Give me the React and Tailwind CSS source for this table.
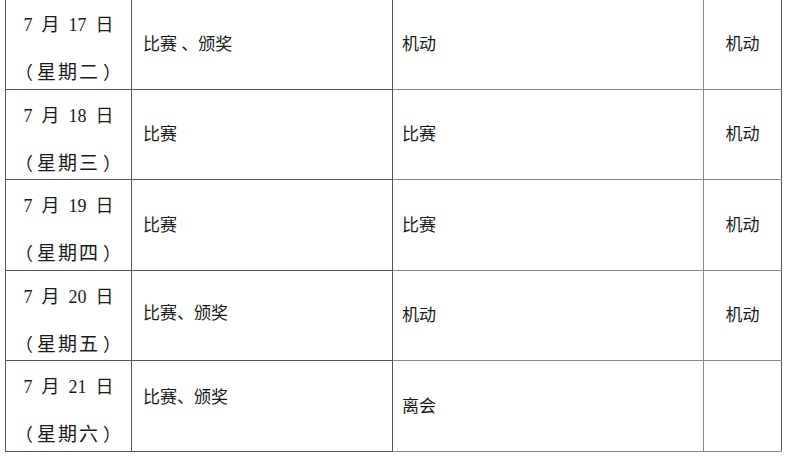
const rows = [
  { day: "17", week: "星期二", a: "比赛 、颁奖", b: "机动", c: "机动", aTop: false },
  { day: "18", week: "星期三", a: "比赛", b: "比赛", c: "机动", aTop: false },
  { day: "19", week: "星期四", a: "比赛", b: "比赛", c: "机动", aTop: false },
  { day: "20", week: "星期五", a: "比赛、颁奖", b: "机动", c: "机动", aTop: "pt-[29px]" },
  { day: "21", week: "星期六", a: "比赛、颁奖", b: "离会", c: "", aTop: "pt-[23px]" },
];

export default function App() {
  return (
    <div
      className="w-[785px] h-[458px] overflow-hidden bg-white text-[#1a1a1a] text-[17px]"
      style={{ fontFamily: '"Liberation Serif", "Noto Sans CJK SC", serif' }}
    >
      <table className="ml-[5px] mt-[-2px] table-fixed border-collapse w-[776px]">
        <colgroup>
          <col className="w-[126px]" />
          <col className="w-[261px]" />
          <col className="w-[311px]" />
          <col className="w-[78px]" />
        </colgroup>
        <tbody>
          {rows.map((r) => (
            <tr key={r.day} className="h-[90.5px]">
              <td className="border border-[#555] p-0 align-top text-center text-[18px]">
                <div className="flex flex-col items-center gap-[20px] pt-[12px] leading-[28px]">
                  <span>7{"\u2002"}月{"\u2002"}{r.day}{"\u2002"}日</span>
                  <span className="flex whitespace-nowrap">
                    <span className="relative -left-[4px] w-[18px]">（</span>
                    <span className="text-[19px] tracking-[2px]">{r.week}</span>
                    <span className="relative left-[3px] w-[18px]">）</span>
                  </span>
                </div>
              </td>
              <td
                className={`border border-[#555] pl-[11px] leading-[28px] ${
                  r.aTop ? `align-top ${r.aTop}` : "align-middle pt-[2px]"
                }`}
              >
                {r.a}
              </td>
              <td className="border border-[#888] pl-[9px] pt-[2px] leading-[28px] align-middle">
                {r.b}
              </td>
              <td className="border border-[#888] border-r-[#555] text-center pt-[2px] leading-[28px] align-middle">
                {r.c}
              </td>
            </tr>
          ))}
        </tbody>
      </table>
    </div>
  );
}
